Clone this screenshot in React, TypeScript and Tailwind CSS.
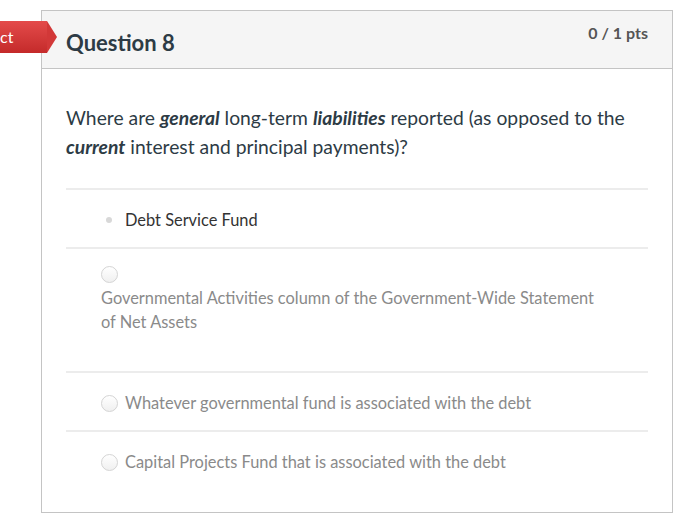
import React from "react";

const FONT = { fontFamily: "Lato, 'Open Sans', 'Liberation Sans', sans-serif" };

function Radio() {
  return (
    <span className="inline-block w-[17px] h-[17px] rounded-full border border-[#d4d4d4] bg-gradient-to-b from-white to-[#f0f0f0] shrink-0" />
  );
}

export default function App() {
  return (
    <div className="relative w-[700px] h-[528px] bg-white overflow-hidden" style={FONT}>
      {/* result tag */}
      <div className="absolute left-0 top-[21px] h-[32px] w-[57px] z-10 flex items-center">
        <div className="h-full w-[47px] bg-gradient-to-b from-[#e44a4a] to-[#c42a2a] flex items-center">
          <span className="text-white text-[16px] leading-none">ct</span>
        </div>
        <div className="h-0 w-0 border-y-[16px] border-y-transparent border-l-[10px] border-l-[#d23838]" />
      </div>

      <div className="ml-[41px] mt-[10px] w-[632px] h-[503px] border border-[#c4c4c4] flex flex-col">
        <div className="h-[58px] bg-[#f5f5f5] border-b border-[#c4c4c4] flex justify-between pl-[24px] pr-[24px] shrink-0">
          <h2 className="text-[22px] font-bold text-[#2d3b45] mt-[17px] leading-[30px]">Question 8</h2>
          <span className="text-[16px] font-bold text-[#555] mt-[10px] leading-[24px]">0 / 1 pts</span>
        </div>

        <div className="px-[24px] flex flex-col">
          <p className="text-[19.3px] leading-[29px] text-[#2d3b45] mt-[34px] mb-[27px]">
            Where are <b><i>general</i></b> long-term <b><i>liabilities</i></b> reported (as opposed to the{" "}
            <b><i>current</i></b> interest and principal payments)?
          </p>

          <div className="border-t-2 border-[#ececec]">
            <div className="h-[57px] flex items-center pl-[40px] pt-[3px] gap-[13px]">
              <span className="w-[6px] h-[6px] rounded-full bg-[#d8d8d8] shrink-0" />
              <span className="text-[16.4px] text-[#333]">Debt Service Fund</span>
            </div>
          </div>

          <div className="border-t-2 border-[#ececec]">
            <div className="h-[122px] pl-[35px] pt-[17px] flex flex-col">
              <Radio />
              <span className="text-[16.4px] leading-[24px] text-[#8a8a8a] mt-[3px] w-[505px]">
                Governmental Activities column of the Government-Wide Statement of Net Assets
              </span>
            </div>
          </div>

          <div className="border-t-2 border-[#ececec]">
            <div className="h-[57px] flex items-center pl-[35px] pt-[3px] gap-[7px]">
              <Radio />
              <span className="text-[16.4px] text-[#8a8a8a]">Whatever governmental fund is associated with the debt</span>
            </div>
          </div>

          <div className="border-t-2 border-[#ececec]">
            <div className="h-[58px] flex items-center pl-[35px] pt-[2px] gap-[7px]">
              <Radio />
              <span className="text-[16.4px] text-[#8a8a8a]">Capital Projects Fund that is associated with the debt</span>
            </div>
          </div>
        </div>
      </div>
    </div>
  );
}
